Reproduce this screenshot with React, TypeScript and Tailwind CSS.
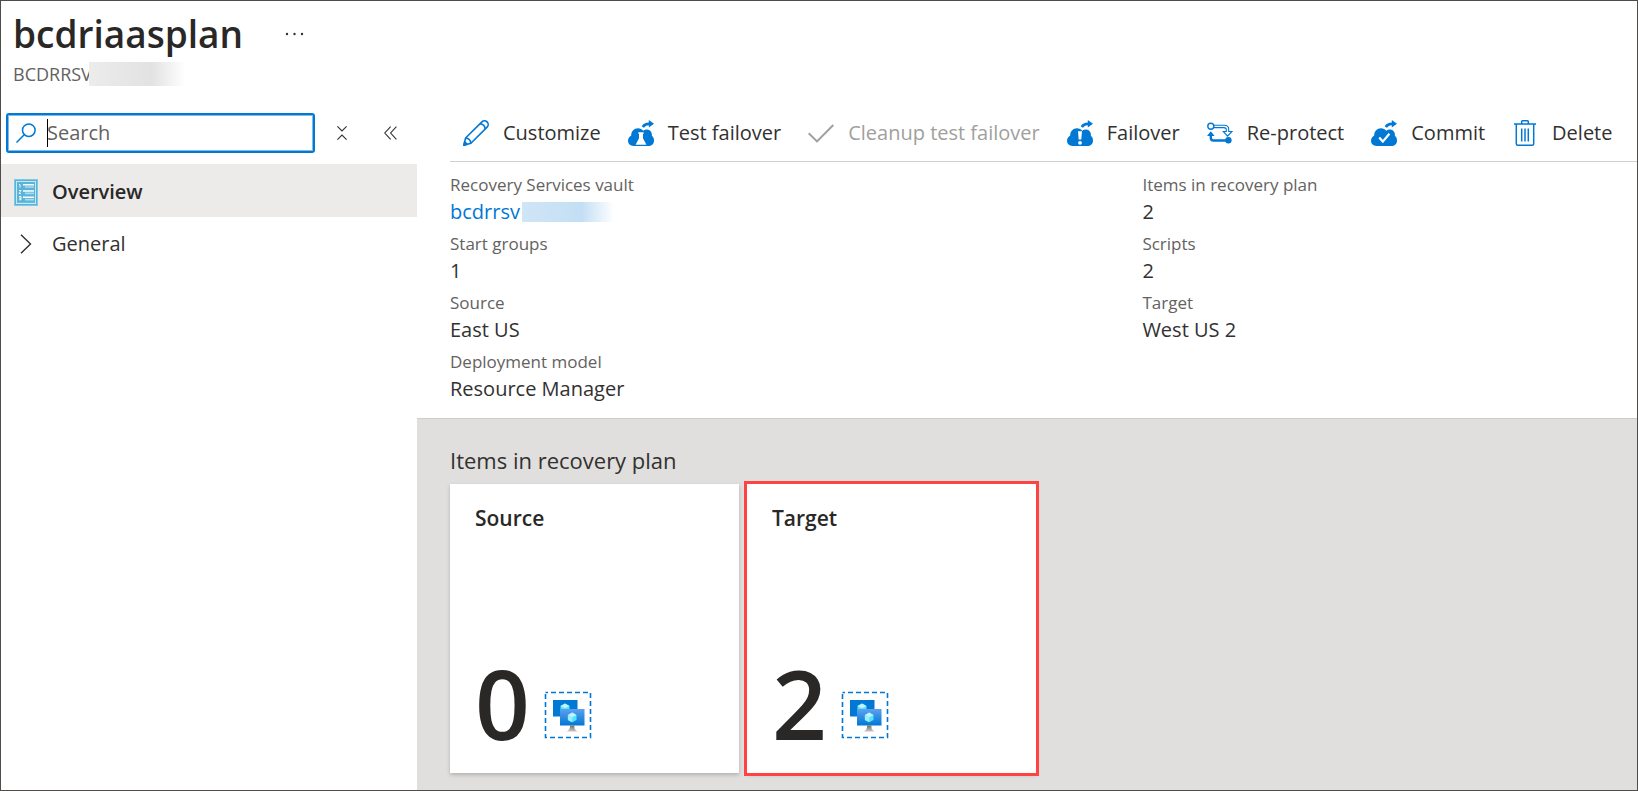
import type { ReactNode } from "react";

const CLOUD =
  "M5.500 26C2.300 26 0 23.700 0 20.800c0-2.300 1.200-4.200 3.200-5.100C3 11.600 6 8.300 10 8.300c2.200 0 4.100.9 5.300 2.400 1.100-.9 2.500-1.400 4-1.200 2.800.3 4.700 2.500 4.600 5.400v.8c1.400 1 2.100 2.700 2.100 4.800 0 3.300-2.200 5.500-5.500 5.500z";

function CloudIcon({ children }: { children: ReactNode }) {
  return (
    <svg className="size-[26px] shrink-0" viewBox="0 0 26 26" aria-hidden="true">
      <path d={CLOUD} fill="#0078d4" />
      <path d="M14.800 7c1.600-2.400 3.700-3.300 6.800-3.100" fill="none" stroke="#0078d4" strokeWidth="2.800" />
      <path d="M20.800 0l5.200 3.800-5.200 3.700z" fill="#0078d4" />
      {children}
    </svg>
  );
}

function PencilIcon() {
  return (
    <svg className="size-[26px] shrink-0" viewBox="0 0 26 26" fill="none" stroke="#0078d4" strokeWidth="1.600" strokeLinejoin="round" aria-hidden="true">
      <path d="M.9 25.200l1.700-7.200L18.900 1.900a3.600 3.600 0 0 1 5.200 5.200L7.900 23.300z" />
      <path d="M2.600 18c2.900.2 5 2.300 5.300 5.300M17 3.800c2.800.3 4.900 2.400 5.200 5.200" />
      <path d="M.9 25.200l.8-3.400 2.500 2.500z" fill="#0078d4" />
    </svg>
  );
}

function CheckIcon() {
  return (
    <svg className="size-[26px] shrink-0" viewBox="0 0 26 26" fill="none" stroke="#a19f9d" strokeWidth="2" aria-hidden="true">
      <path d="M.7 13.200l8.300 8.200L25.300 5" />
    </svg>
  );
}

function ReprotectIcon() {
  return (
    <svg className="size-[26px] shrink-0" viewBox="0 0 26 26" fill="none" stroke="#0078d4" aria-hidden="true">
      <circle cx="3.800" cy="6.300" r="3" strokeWidth="1.400" />
      <path d="M6.800 5.200h10.400c3 0 4.500 1.500 4.500 4v2.300h3.200l-4.300 4.600-4.300-4.600h3V9.800c0-1.500-.9-2.200-2.400-2.200H6.800" strokeWidth="1.100" />
      <path d="M3.800 14.500v3.300c0 1.900.9 2.700 2.700 2.700H21" strokeWidth="2.400" />
      <path d="M0 15.900l3.800-4.600 3.800 4.600z" fill="#0078d4" stroke="none" />
      <circle cx="21.400" cy="20.300" r="3.200" fill="#0078d4" stroke="none" />
    </svg>
  );
}

function TrashIcon() {
  return (
    <svg className="size-[26px] shrink-0" viewBox="-2 0 26 26" fill="none" stroke="#0078d4" strokeWidth="1.500" aria-hidden="true">
      <path d="M0 4h22M7.700 4V1.600c0-.5.300-.8.800-.8h5c.5 0 .8.300.8.800V4M2.300 4v19.700c0 .9.600 1.500 1.500 1.500h14.400c.9 0 1.500-.6 1.500-1.500V4" />
      <path d="M7.700 8.500v13M11 8.500v13M14.300 8.500v13" />
    </svg>
  );
}

const ACTIONS: { label: string; icon: ReactNode; disabled?: boolean }[] = [
  { label: "Customize", icon: <PencilIcon /> },
  {
    label: "Test failover",
    icon: (
      <CloudIcon>
        <path d="M10.300 12.300h5.400v1.500h-.7v4.500l3.400 6.500H7.600l3.400-6.500v-4.500h-.7z" fill="#fff" />
      </CloudIcon>
    ),
  },
  { label: "Cleanup test failover", icon: <CheckIcon />, disabled: true },
  {
    label: "Failover",
    icon: (
      <CloudIcon>
        <path d="M11 11.300h4l-.7 8.200h-2.600z" fill="#fff" />
        <circle cx="13" cy="22.800" r="1.900" fill="#fff" />
      </CloudIcon>
    ),
  },
  { label: "Re-protect", icon: <ReprotectIcon /> },
  {
    label: "Commit",
    icon: (
      <CloudIcon>
        <path d="M8.200 17.600l3.600 4 6.600-7.800" fill="none" stroke="#fff" strokeWidth="2.200" />
      </CloudIcon>
    ),
  },
  { label: "Delete", icon: <TrashIcon /> },
];

function VmGroupIcon() {
  return (
    <svg className="size-12" viewBox="0 0 48 48" aria-hidden="true">
      <defs>
        <linearGradient id="screen" x1="0" y1="0" x2="0" y2="1">
          <stop offset="0" stopColor="#5ea0ef" />
          <stop offset="1" stopColor="#0078d4" />
        </linearGradient>
        <linearGradient id="stand" x1="0" y1="0" x2="0" y2="1">
          <stop offset="0" stopColor="#707070" />
          <stop offset="1" stopColor="#c8c8c8" />
        </linearGradient>
      </defs>
      <rect x="1.500" y="1.500" width="45" height="45" fill="none" stroke="#0078d4" strokeWidth="1.600" strokeDasharray="5 3" strokeDashoffset="2.500" />
      <rect x="9" y="9" width="24.500" height="16.500" fill="#0078d4" />
      <path d="M21 12.500l4.500 2.400v5L21 22.300l-4.500-2.400v-5z" fill="#50e6ff" />
      <path d="M21 12.500l4.500 2.400-4.500 2.400-4.500-2.400z" fill="#c3f1ff" />
      <rect x="16" y="18" width="24.500" height="16.500" fill="url(#screen)" />
      <path d="M28.200 21.500l4.300 2.400v5l-4.300 2.400-4.300-2.400v-5z" fill="#50e6ff" />
      <path d="M28.200 21.500l4.300 2.400-4.300 2.400-4.300-2.400z" fill="#c3f1ff" />
      <path d="M28.200 26.300v5l-4.300-2.400v-5z" fill="#9cebff" />
      <path d="M26 34.500h4.400c0 3 .4 4.800 3.600 6H22.400c3.200-1.200 3.600-3 3.600-6z" fill="url(#stand)" />
    </svg>
  );
}

function OverviewIcon() {
  return (
    <svg className="h-[27px] w-6" viewBox="0 0 24 27" aria-hidden="true">
      <rect width="24" height="27" fill="#7fc9e4" />
      <rect x="1.500" y="1.500" width="21" height="24" fill="none" stroke="#59b4d9" />
      <rect x="2.500" y="2.500" width="19" height="22" fill="none" stroke="#c9e8f4" />
      <rect x="3" y="3" width="18" height="20.500" fill="#59b4d9" />
      <path d="M9 5.700h11M9 12h11M9 18.300h11" stroke="#fff" strokeWidth="1.500" />
      <path d="M11 8h9M11 14.300h9M11 20.600h9" stroke="#a9dcef" strokeWidth="1.700" />
      <path d="M5 5.500h1v3M5 11.500h2l-2 3h2M5 17.500h2v3.300H5M5 19.200h2" fill="none" stroke="#fff" strokeWidth=".9" />
    </svg>
  );
}

function Essential({ label, children }: { label: string; children: ReactNode }) {
  return (
    <div className="pb-[5px]">
      <dt className="text-[17px] leading-[27px] text-[#646260]">{label}</dt>
      <dd className="flex h-[27px] items-center text-[20px] leading-[27px] text-[#323130]">{children}</dd>
    </div>
  );
}

function Tile({ title, count, selected }: { title: string; count: number; selected?: boolean }) {
  return (
    <button
      type="button"
      className={`flex size-[289px] flex-col justify-between bg-white px-[25px] pt-[18px] pb-[18px] text-left text-[#292827] shadow-[0_2px_4px_rgba(0,0,0,0.2)] ${
        selected ? "outline-3 outline-[#ff4343]" : ""
      }`}
    >
      <span className="text-[21px] leading-8 font-semibold">{title}</span>
      <span className="flex items-end gap-[14px]">
        <span className="text-[96px] leading-[104px] font-semibold">{count}</span>
        <span className="pb-4">
          <VmGroupIcon />
        </span>
      </span>
    </button>
  );
}

export default function App() {
  return (
    <div className="flex min-h-screen flex-col border border-[#504c4c] bg-white font-['Open_Sans','Noto_Sans',sans-serif] text-[#323130]">
      <header className="h-28 px-3">
        <div className="flex h-[61px] items-center gap-[42px] pt-[5px]">
          <h1 className="text-[37px] leading-[56px] font-semibold text-[#292827]">bcdriaasplan</h1>
          <button type="button" aria-label="More actions" className="flex h-6 items-center">
            <svg className="h-1 w-5" viewBox="0 0 20 4" fill="#323130" aria-hidden="true">
              <circle cx="2" cy="2" r="1.200" />
              <circle cx="9.500" cy="2" r="1.200" />
              <circle cx="17" cy="2" r="1.200" />
            </svg>
          </button>
        </div>
        <div className="flex h-6 items-center text-[18px] text-[#646260]">
          <span className="leading-6">BCDRRSV</span>
          <span className="-ml-[3px] h-6 w-24 bg-linear-to-r from-[#ececec] via-[#e2e2e2] via-65% to-white" />
        </div>
      </header>

      <div className="flex grow">
        <aside className="w-[416px] shrink-0">
          <div className="flex items-center px-[5px]">
            <label className="flex h-10 w-[309px] items-center gap-[11px] rounded-[3px] border-2 border-[#0078d4] pl-2 shadow-[inset_0_0_0_1px_#7fbbe9]">
              <svg className="size-5 shrink-0" viewBox="0 0 20 20" fill="none" stroke="#0078d4" strokeWidth="1.500" aria-hidden="true">
                <circle cx="12.800" cy="7.200" r="6.300" />
                <path d="M8.200 11.800L.5 19.500" />
              </svg>
              <span className="h-7 border-l border-black" />
              <input
                type="text"
                aria-label="Search"
                placeholder="Search"
                className="-ml-3 w-full bg-transparent text-[20px] outline-none placeholder:text-[#646260]"
              />
            </label>
            <button type="button" aria-label="Collapse groups" className="ml-[22px]">
              <svg className="h-[14px] w-[10px]" viewBox="0 0 10 14" fill="none" stroke="#323130" strokeWidth="1.100" aria-hidden="true">
                <path d="M.4.400L5 5 9.600.400M.4 13.600L5 9l4.600 4.600" />
              </svg>
            </button>
            <button type="button" aria-label="Collapse menu" className="ml-[37px]">
              <svg className="h-[14px] w-[13px]" viewBox="0 0 13 14" fill="none" stroke="#323130" strokeWidth="1.100" aria-hidden="true">
                <path d="M6.600.600L.8 7l5.800 6.400M12.400.600L6.600 7l5.800 6.400" />
              </svg>
            </button>
          </div>
          <nav className="pt-[11px]">
            <a href="#overview" className="flex h-[53px] items-center gap-[14px] bg-[#edebe9] pt-[3px] pl-[13px] text-[20px] font-semibold text-[#292827]">
              <OverviewIcon />
              Overview
            </a>
            <a href="#general" className="flex h-[53px] items-center gap-[14px] pl-[13px] text-[20px]">
              <span className="flex w-6 justify-center">
                <svg className="h-5 w-3" viewBox="0 0 12 20" fill="none" stroke="#323130" strokeWidth="1.400" aria-hidden="true">
                  <path d="M1 .7L10.500 10 1 19.300" />
                </svg>
              </span>
              General
            </a>
          </nav>
        </aside>

        <main className="flex min-w-0 grow flex-col">
          <div className="ml-[33px] flex h-[49px] items-center overflow-hidden border-b border-[#d2d0ce] pb-[9px]">
            {ACTIONS.map((a) => (
              <button
                key={a.label}
                type="button"
                disabled={a.disabled}
                className="flex items-center gap-[14px] pr-[14px] pl-[13px] text-[20px] whitespace-nowrap disabled:text-[#a19f9d]"
              >
                {a.icon}
                {a.label}
              </button>
            ))}
          </div>

          <dl className="ml-[33px] grid grid-cols-[7fr_5fr] pt-[9px] pb-[11px]">
            <Essential label="Recovery Services vault">
              <a href="#vault" className="text-[#0078d4]">
                bcdrrsv
              </a>
              <span className="ml-[2px] h-5 w-[92px] bg-linear-to-r from-[#d0e5f6] via-[#c3dff5] via-65% to-white" />
            </Essential>
            <Essential label="Items in recovery plan">2</Essential>
            <Essential label="Start groups">1</Essential>
            <Essential label="Scripts">2</Essential>
            <Essential label="Source">East US</Essential>
            <Essential label="Target">West US 2</Essential>
            <Essential label="Deployment model">Resource Manager</Essential>
          </dl>

          <section className="grow border-t border-[#cfcdcb] bg-[#e0dfdd] px-[33px] pt-[27px] pb-[15px]">
            <h2 className="h-[38px] text-[22px] leading-[28px]">Items in recovery plan</h2>
            <div className="flex gap-2">
              <Tile title="Source" count={0} />
              <Tile title="Target" count={2} selected />
            </div>
          </section>
        </main>
      </div>
    </div>
  );
}
